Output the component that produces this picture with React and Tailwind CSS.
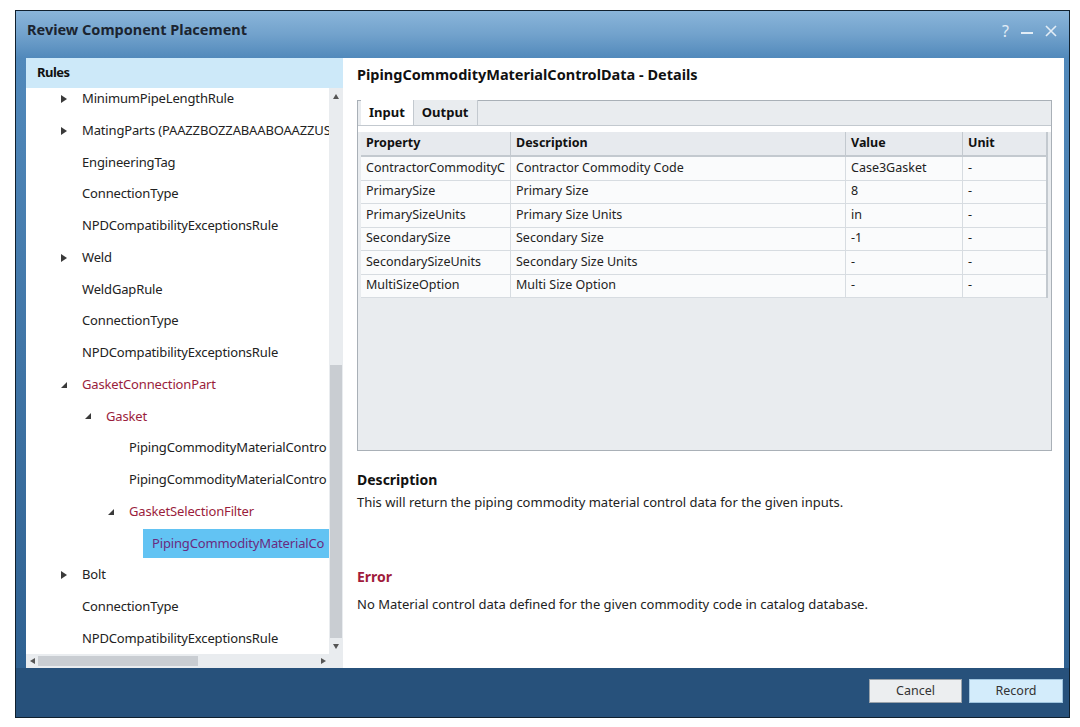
import { useState } from "react";

const font = { fontFamily: '"Noto Sans", "Open Sans", Arial, sans-serif' };

// tree rows as shown in the Rules pane (text as visible, pane clips it)
const treeRows = [
  { text: "MinimumPipeLengthRule", level: 0, icon: "closed" },
  { text: "MatingParts (PAAZZBOZZABAABOAAZZUS", level: 0, icon: "closed" },
  { text: "EngineeringTag", level: 0 },
  { text: "ConnectionType", level: 0 },
  { text: "NPDCompatibilityExceptionsRule", level: 0 },
  { text: "Weld", level: 0, icon: "closed" },
  { text: "WeldGapRule", level: 0 },
  { text: "ConnectionType", level: 0 },
  { text: "NPDCompatibilityExceptionsRule", level: 0 },
  { text: "GasketConnectionPart", level: 0, icon: "open", red: true },
  { text: "Gasket", level: 1, icon: "open", red: true },
  { text: "PipingCommodityMaterialContro", level: 2 },
  { text: "PipingCommodityMaterialContro", level: 2 },
  { text: "GasketSelectionFilter", level: 2, icon: "open", red: true },
  { text: "PipingCommodityMaterialCo", level: 3, selected: true },
  { text: "Bolt", level: 0, icon: "closed" },
  { text: "ConnectionType", level: 0 },
  { text: "NPDCompatibilityExceptionsRule", level: 0 },
];

const tableRows = [
  ["ContractorCommodityC", "Contractor Commodity Code", "Case3Gasket", "-"],
  ["PrimarySize", "Primary Size", "8", "-"],
  ["PrimarySizeUnits", "Primary Size Units", "in", "-"],
  ["SecondarySize", "Secondary Size", "-1", "-"],
  ["SecondarySizeUnits", "Secondary Size Units", "-", "-"],
  ["MultiSizeOption", "Multi Size Option", "-", "-"],
];

const indentClass = ["pl-[33px]", "pl-[57px]", "pl-[80px]", "pl-[103px]"];

const Expander = ({ icon }) => {
  if (icon === "closed")
    return (
      <svg width="8" height="10" viewBox="0 0 8 10" className="ml-[1px]">
        <path d="M1 1 L7 5 L1 9 Z" fill="#3a3a3a" />
      </svg>
    );
  if (icon === "open")
    return (
      <svg width="8" height="8" viewBox="0 0 8 8" className="ml-[1px]">
        <path d="M7 1 L7 7 L1 7 Z" fill="#3a3a3a" />
      </svg>
    );
  return null;
};

const TreeRow = ({ row }) => (
  <div className={`flex h-[31.75px] items-center whitespace-nowrap ${indentClass[row.level]}`}>
    <div className="flex w-[23px] shrink-0 items-center">
      <Expander icon={row.icon} />
    </div>
    {row.selected ? (
      <div className="-ml-[9px] flex h-[29px] flex-1 items-center bg-[#62c3f3] pl-[9px] text-[#6a2a80]">
        {row.text}
      </div>
    ) : (
      <span className={row.red ? "text-[#9a1d3c]" : "text-[#222]"}>{row.text}</span>
    )}
  </div>
);

const RulesPane = () => (
  <div className="flex w-[317px] shrink-0 flex-col">
    <div className="flex h-[30px] items-center bg-[#cde9f9] pl-[11px] text-[13px] font-bold tracking-[-0.5px] text-[#111]">
      Rules
    </div>
    <div className="flex min-h-0 flex-1">
      <div className="relative flex min-w-0 flex-1 flex-col">
        <div className="min-h-0 flex-1 overflow-hidden text-[13px] tracking-[-0.15px]">
          <div className="-mt-[5px]">
            {treeRows.map((row, i) => (
              <TreeRow key={i} row={row} />
            ))}
          </div>
        </div>
        {/* horizontal scrollbar */}
        <div className="flex h-[14px] shrink-0 items-center bg-[#e9ecef]">
          <div className="flex w-[12px] justify-center">
            <svg width="5" height="6" viewBox="0 0 5 6">
              <path d="M5 0 L0 3 L5 6 Z" fill="#555" />
            </svg>
          </div>
          <div className="h-[10px] w-[160px] bg-[#c9cdd2]" />
          <div className="flex-1" />
          <div className="flex w-[12px] justify-center">
            <svg width="5" height="6" viewBox="0 0 5 6">
              <path d="M0 0 L5 3 L0 6 Z" fill="#555" />
            </svg>
          </div>
        </div>
      </div>
      {/* vertical scrollbar */}
      <div className="flex w-[14px] shrink-0 flex-col bg-[#e9ecef]">
        <div className="flex h-[16px] items-center justify-center">
          <svg width="6" height="5" viewBox="0 0 6 5">
            <path d="M0 5 L3 0 L6 5 Z" fill="#555" />
          </svg>
        </div>
        <div className="h-[261px]" />
        <div className="mx-[1px] flex-1 bg-[#c9cdd2]" />
        <div className="flex h-[16px] items-center justify-center">
          <svg width="6" height="5" viewBox="0 0 6 5">
            <path d="M0 0 L6 0 L3 5 Z" fill="#555" />
          </svg>
        </div>
        <div className="h-[14px]" />
      </div>
    </div>
  </div>
);

const DetailsPane = () => {
  const [tab, setTab] = useState("Input");
  return (
    <div className="flex min-w-0 flex-1 flex-col bg-white pl-[14px] pr-[12px]">
      <div className="mt-[6px] h-[21px] text-[14.5px] font-bold text-[#111]">
        PipingCommodityMaterialControlData - Details
      </div>
      <div className="mt-[15px] flex h-[351px] flex-col border border-[#a9b0b7] bg-[#e9ecef]">
        <div className="flex h-[25px] items-end border-b border-[#c3c9cf] pl-[3px]">
          {["Input", "Output"].map((t) => (
            <button
              key={t}
              onClick={() => setTab(t)}
              className={`h-[25px] border-r border-[#c3c9cf] px-[8px] text-[13px] font-bold text-[#111] ${
                tab === t ? "bg-white" : "bg-[#e9ecef]"
              }`}
            >
              {t}
            </button>
          ))}
        </div>
        <div className="h-[6px] bg-white" />
        <div className="flex-1 px-[3px]">
          <div className="grid grid-cols-[149px_335px_117px_84px] border-r-2 border-[#c3c9cf] text-[12.5px] text-[#222]">
            {["Property", "Description", "Value", "Unit"].map((h, i) => (
              <div
                key={h}
                className={`flex h-[25px] items-center border-b-2 border-[#c3c9cf] bg-[#e7eaee] pl-[5px] font-bold text-[#111] ${
                  i > 0 ? "border-l border-[#b8bec5]" : ""
                }`}
              >
                {h}
              </div>
            ))}
            {tableRows.map((r, ri) =>
              r.map((c, ci) => (
                <div
                  key={`${ri}-${ci}`}
                  className={`flex h-[23.5px] items-center overflow-hidden whitespace-nowrap border-b border-[#d7dce1] bg-[#fafbfc] pl-[5px] ${
                    ci > 0 ? "border-l border-[#b8bec5]" : ""
                  }`}
                >
                  {c}
                </div>
              ))
            )}
          </div>
        </div>
      </div>
      <div className="mt-[18px] text-[14px] font-bold text-[#111]">Description</div>
      <div className="mt-[3px] text-[13px] text-[#222]">
        This will return the piping commodity material control data for the given inputs.
      </div>
      <div className="mt-[53px] text-[14px] font-bold text-[#a01c3c]">Error</div>
      <div className="mt-[8px] text-[13px] text-[#222]">
        No Material control data defined for the given commodity code in catalog database.
      </div>
    </div>
  );
};

export default function App() {
  return (
    <div className="h-[727px] w-[1080px] bg-white pl-[15px] pt-[10px]" style={font}>
      <div className="flex h-[708px] w-[1055px] flex-col border border-[#10202e] bg-[#2b5a86]">
        {/* title bar */}
        <div className="flex h-[47px] shrink-0 items-start justify-between bg-gradient-to-b from-[#8ab5da] via-[#72a2cc] to-[#5189bb] pl-[11px] pr-[12px] pt-[8px]">
          <div className="text-[14.5px] font-bold text-[#1b2430]">Review Component Placement</div>
          <div className="flex items-center gap-[12px] text-[16px] text-[#e3edf6]">
            <span>?</span>
            <span className="mt-[4px] block h-[2px] w-[12px] bg-[#e3edf6]" />
            <svg width="12" height="12" viewBox="0 0 12 12">
              <path d="M1 1 L11 11 M11 1 L1 11" stroke="#e3edf6" strokeWidth="1.6" />
            </svg>
          </div>
        </div>
        {/* body */}
        <div className="flex h-[610px] shrink-0 bg-gradient-to-b from-[#5189bb] to-[#2f6191] pl-[10px] pr-[7px]">
          <div className="flex flex-1 bg-white">
            <RulesPane />
            <DetailsPane />
          </div>
        </div>
        {/* footer */}
        <div className="flex flex-1 items-start justify-end gap-[7px] bg-[#27517b] pr-[6px] pt-[11px]">
          <button className="h-[24px] w-[93px] border border-[#9aa3ab] bg-[#eceef0] text-[12.5px] text-[#333]">
            Cancel
          </button>
          <button className="h-[24px] w-[94px] border border-[#9fc4de] bg-[#d3ecfb] text-[12.5px] text-[#333]">
            Record
          </button>
        </div>
      </div>
    </div>
  );
}
